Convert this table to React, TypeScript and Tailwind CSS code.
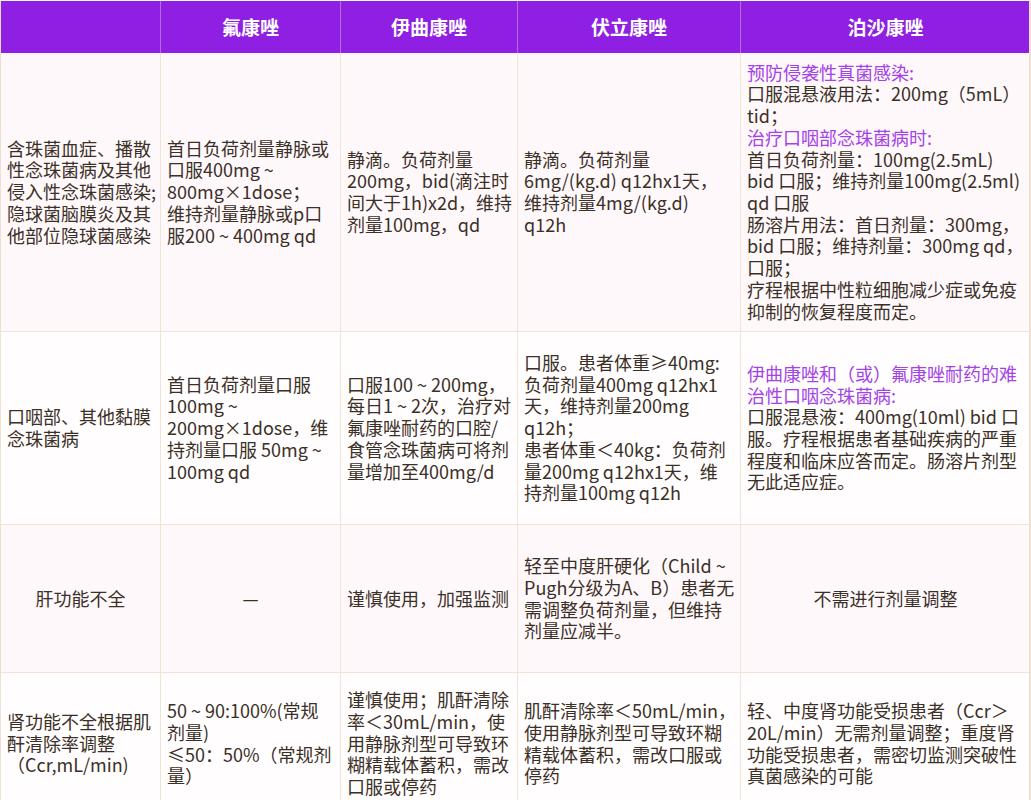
import React from "react";

type Line = string | { t: string; p: true };
type Cell = { lines: Line[]; center?: boolean };

const heads = ["", "氟康唑", "伊曲康唑", "伏立康唑", "泊沙康唑"];

const rows: { h: string; bg: string; cells: Cell[] }[] = [
  {
    h: "h-[279px]",
    bg: "bg-[#fff8fb]",
    cells: [
      { lines: ["含珠菌血症、播散", "性念珠菌病及其他", "侵入性念珠菌感染;", "隐球菌脑膜炎及其", "他部位隐球菌感染"] },
      { lines: ["首日负荷剂量静脉或", "口服400mg～", "800mg×1dose；", "维持剂量静脉或p口", "服200～400mg qd"] },
      { lines: ["静滴。负荷剂量", "200mg，bid(滴注时", "间大于1h)x2d，维持", "剂量100mg，qd"] },
      { lines: ["静滴。负荷剂量", "6mg/(kg.d) q12hx1天，", "维持剂量4mg/(kg.d)", "q12h"] },
      {
        lines: [
          { t: "预防侵袭性真菌感染:", p: true },
          "口服混悬液用法：200mg（5mL）",
          "tid；",
          { t: "治疗口咽部念珠菌病时:", p: true },
          "首日负荷剂量：100mg(2.5mL)",
          "bid 口服；维持剂量100mg(2.5ml)",
          "qd 口服",
          "肠溶片用法：首日剂量：300mg，",
          "bid 口服；维持剂量：300mg qd，",
          "口服；",
          "疗程根据中性粒细胞减少症或免疫",
          "抑制的恢复程度而定。",
        ],
      },
    ],
  },
  {
    h: "h-[193px]",
    bg: "bg-[#fffdfd]",
    cells: [
      { lines: ["口咽部、其他黏膜", "念珠菌病"] },
      { lines: ["首日负荷剂量口服", "100mg～", "200mg×1dose，维", "持剂量口服 50mg～", "100mg qd"] },
      { lines: ["口服100～200mg，", "每日1～2次，治疗对", "氟康唑耐药的口腔/", "食管念珠菌病可将剂", "量增加至400mg/d"] },
      {
        lines: [
          "口服。患者体重≥40mg:",
          "负荷剂量400mg q12hx1",
          "天，维持剂量200mg",
          "q12h；",
          "患者体重＜40kg：负荷剂",
          "量200mg q12hx1天，维",
          "持剂量100mg q12h",
        ],
      },
      {
        lines: [
          { t: "伊曲康唑和（或）氟康唑耐药的难", p: true },
          { t: "治性口咽念珠菌病:", p: true },
          "口服混悬液：400mg(10ml) bid 口",
          "服。疗程根据患者基础疾病的严重",
          "程度和临床应答而定。肠溶片剂型",
          "无此适应症。",
        ],
      },
    ],
  },
  {
    h: "h-[148px]",
    bg: "bg-[#fff8fb]",
    cells: [
      { lines: ["肝功能不全"], center: true },
      { lines: ["—"], center: true },
      { lines: ["谨慎使用，加强监测"] },
      { lines: ["轻至中度肝硬化（Child～", "Pugh分级为A、B）患者无", "需调整负荷剂量，但维持", "剂量应减半。"] },
      { lines: ["不需进行剂量调整"], center: true },
    ],
  },
  {
    h: "h-[142px]",
    bg: "bg-[#fffdfd]",
    cells: [
      { lines: ["肾功能不全根据肌", "酐清除率调整", "（Ccr,mL/min)"] },
      { lines: ["50～90:100%(常规", "剂量)", "≤50：50%（常规剂", "量）"] },
      { lines: ["谨慎使用；肌酐清除", "率＜30mL/min，使", "用静脉剂型可导致环", "糊精载体蓄积，需改", "口服或停药"] },
      { lines: ["肌酐清除率＜50mL/min，", "使用静脉剂型可导致环糊", "精载体蓄积，需改口服或", "停药"] },
      { lines: ["轻、中度肾功能受损患者（Ccr＞", "20L/min）无需剂量调整；重度肾", "功能受损患者，需密切监测突破性", "真菌感染的可能"] },
    ],
  },
];

const cols = "grid grid-cols-[160px_180px_177px_223px_289px]";

// the source uses a small "~" with air around it instead of the wide wave
function withTilde(s: string) {
  const parts = s.split("～");
  return parts.map((p, i) => (
    <React.Fragment key={i}>
      {p}
      {i < parts.length - 1 && <span className="mx-[4px]">~</span>}
    </React.Fragment>
  ));
}

export default function App() {
  return (
    <div
      className="w-[1031px] bg-white text-[#3b3027]"
      style={{ fontFamily: '"Noto Sans CJK SC", "Noto Sans", sans-serif' }}
    >
      <div className="border-l border-r-2 border-[#eee0d0] pt-[1px]">
        <div className={`${cols} h-[52px] bg-[#8f1fe2]`}>
          {heads.map((h, i) => (
            <div
              key={i}
              className={`flex items-center justify-center text-[19px] font-bold text-white ${
                i < 4 ? "border-r border-[#b36cf0]" : ""
              }`}
            >
              {h}
            </div>
          ))}
        </div>
        {rows.map((r, ri) => (
          <div key={ri} className={`${cols} ${r.h} ${r.bg} border-b border-[#f1e4d6]`}>
            {r.cells.map((c, ci) => (
              <div
                key={ci}
                className={`flex flex-col justify-center px-[6px] text-[18px] leading-[21.7px] whitespace-nowrap ${
                  c.center ? "items-center" : "items-start"
                } ${ci < 4 ? "border-r border-[#f1e4d6]" : ""}`}
              >
                {c.lines.map((l, li) =>
                  typeof l === "string" ? (
                    <div key={li}>{withTilde(l)}</div>
                  ) : (
                    <div key={li} className="text-[#a342e6]">
                      {l.t}
                    </div>
                  )
                )}
              </div>
            ))}
          </div>
        ))}
      </div>
    </div>
  );
}
